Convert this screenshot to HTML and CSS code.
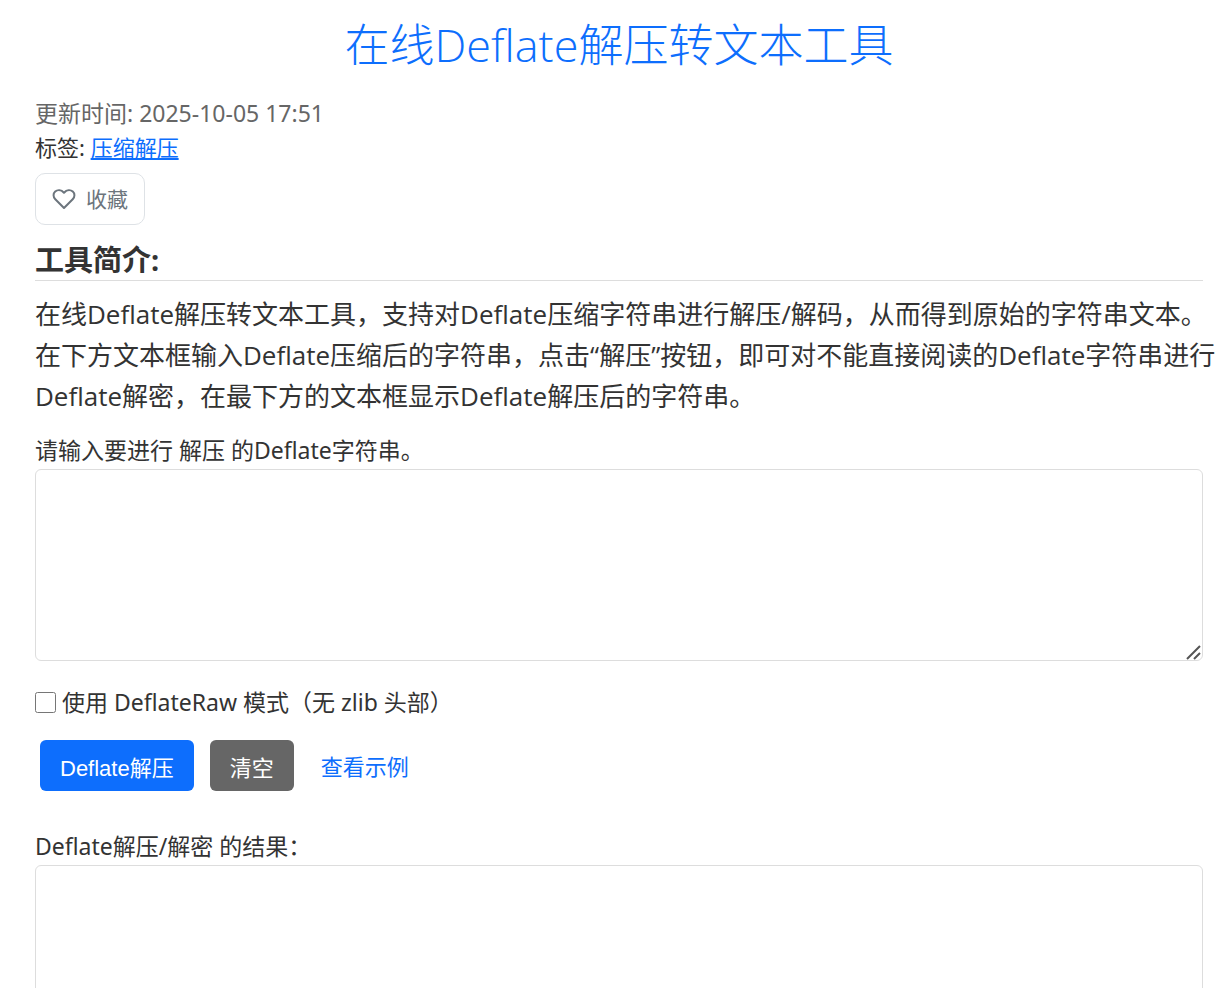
FILE: index.html
```html
<!DOCTYPE html>
<html lang="zh-CN">
<head>
    <meta charset="UTF-8">
    <meta name="viewport" content="width=device-width, initial-scale=1.0">
    <title>在线Deflate解压转文本工具</title>
    <link rel="stylesheet" href="styles.css">
</head>
<body>
    <main class="container">
        <h1>在线Deflate解压转文本工具</h1>
        <div class="meta">
            <div class="updated">更新时间: 2025-10-05 17:51</div>
            <div class="tags">标签: <a href="#">压缩解压</a></div>
        </div>
        <button type="button" class="favorite">
            <svg class="heart" viewBox="0 0 24 24" aria-hidden="true">
                <path d="M12 21 3.300 12.300C1 9.900 1 6.600 3.200 4.600 5.600 2.400 9.200 2.700 12 5.700 14.800 2.700 18.400 2.400 20.800 4.600 23 6.600 23 9.900 20.700 12.300Z"/>
            </svg>
            <span>收藏</span>
        </button>
        <h2>工具简介:</h2>
        <p class="intro">在线Deflate解压转文本工具，支持对Deflate压缩字符串进行解压/解码，从而得到原始的字符串文本。<br>在下方文本框输入Deflate压缩后的字符串，点击“解压”按钮，即可对不能直接阅读的Deflate字符串进行Deflate解密，在最下方的文本框显示Deflate解压后的字符串。</p>
        <label class="field-label" for="source">请输入要进行 解压 的Deflate字符串。</label>
        <div class="field">
            <textarea id="source"></textarea>
            <svg class="grip" viewBox="0 0 16 16" aria-hidden="true">
                <path d="M1 15 14 2M8 15 14 9"/>
            </svg>
        </div>
        <div class="option">
            <input type="checkbox" id="raw-mode">
            <label for="raw-mode">使用 DeflateRaw 模式（无 zlib 头部）</label>
        </div>
        <div class="actions">
            <button type="button" class="btn btn-primary">Deflate解压</button>
            <button type="button" class="btn btn-secondary">清空</button>
            <a href="#" class="example">查看示例</a>
        </div>
        <label class="field-label" for="result">Deflate解压/解密 的结果：</label>
        <div class="field">
            <textarea id="result"></textarea>
            <svg class="grip" viewBox="0 0 16 16" aria-hidden="true">
                <path d="M1 15 14 2M8 15 14 9"/>
            </svg>
        </div>
    </main>
</body>
</html>
```

FILE: styles.css
```css
* {
    box-sizing: border-box;
}

body {
    margin: 0;
    background: #fff;
    color: #333;
    font-family: "Noto Sans", "Noto Sans CJK SC", sans-serif;
    font-size: 22px;
    line-height: 34px;
}

.container {
    padding: 14px 21px 0 35px;
}

h1 {
    margin: 0 0 21px;
    color: #0d6efd;
    font-family: "Open Sans", "Noto Sans CJK SC", sans-serif;
    font-size: 45px;
    font-weight: 300;
    line-height: 61px;
    text-align: center;
}

.updated {
    color: #666;
    font-size: 23px;
}

a {
    color: #0d6efd;
}

.favorite {
    display: flex;
    align-items: center;
    gap: 10px;
    height: 52px;
    margin: 9px 0 15px;
    padding: 0 16px;
    border: 1px solid #dee2e6;
    border-radius: 10px;
    background: #fff;
    color: #6c757d;
    font: inherit;
    font-size: 21px;
}

.heart {
    width: 24px;
    height: 24px;
    fill: none;
    stroke: currentColor;
    stroke-width: 2;
    stroke-linejoin: round;
}

h2 {
    margin: 0 0 13px;
    border-bottom: 1px solid #ddd;
    font-size: 29px;
    font-weight: 700;
    line-height: 40px;
}

/* lets a full line of characters run slightly into the page gutter */
.intro {
    margin: 0 -16px 16px 0;
    font-family: "Open Sans", "Noto Sans CJK SC", sans-serif;
    font-size: 26px;
    line-height: 41px;
}

.field-label {
    display: block;
    margin-bottom: 2px;
    font-size: 23px;
}

.field {
    position: relative;
}

textarea {
    display: block;
    width: 100%;
    height: 192px;
    border: 1px solid #ddd;
    border-radius: 6px;
    background: #fff;
    font: inherit;
    resize: vertical;
}

textarea::-webkit-resizer {
    background: transparent;
}

.grip {
    position: absolute;
    right: 1px;
    bottom: 1px;
    width: 16px;
    height: 16px;
    fill: none;
    stroke: #555;
    stroke-width: 2;
    pointer-events: none;
}

.option {
    display: flex;
    align-items: center;
    gap: 6px;
    margin: 24px 0 21px;
    font-size: 23px;
}

.option input {
    width: 21px;
    height: 21px;
    margin: 0;
}

.actions {
    display: flex;
    align-items: center;
    gap: 16px;
    margin: 0 5px 38px;
}

.btn {
    height: 51px;
    padding: 0 20px;
    border: 0;
    border-radius: 6px;
    color: #fff;
    font-family: "Liberation Sans", "Noto Sans CJK SC", sans-serif;
    font-size: 22px;
}

.btn-primary {
    background: #0d6efd;
}

.btn-secondary {
    background: #666;
}

.example {
    margin-left: 11px;
    text-decoration: none;
}
```
